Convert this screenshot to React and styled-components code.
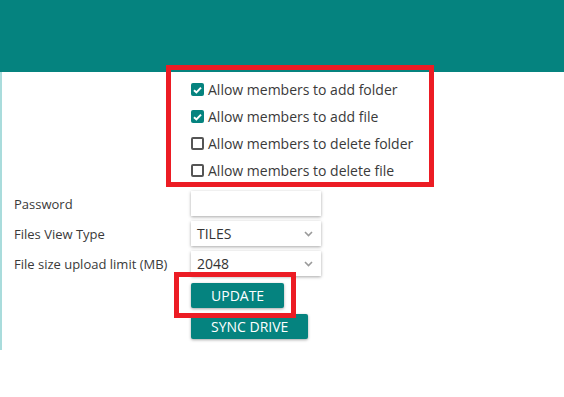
import React from 'react';
import styled, { createGlobalStyle } from 'styled-components';

const teal = '#05837f';

const GlobalStyle = createGlobalStyle`
  body {
    margin: 0;
    background: #ffffff;
    font-family: 'Open Sans', 'Liberation Sans', sans-serif;
  }
`;

const Header = styled.header`
  height: 72px;
  background: ${teal};
`;

const Panel = styled.main`
  height: 278px;
  box-sizing: border-box;
  border-left: 2px solid #a9dcdc;
  padding: 4.5px 0 0 12px;
`;

const Highlight = styled.div`
  position: relative;

  &::after {
    content: '';
    position: absolute;
    top: ${({ $top }) => $top}px;
    left: ${({ $left }) => $left}px;
    right: ${({ $right }) => $right}px;
    bottom: ${({ $bottom }) => $bottom}px;
    border: 5px solid #ec1c24;
    pointer-events: none;
  }
`;

const CheckList = styled.div`
  display: flex;
  flex-direction: column;
  margin-left: 177px;
  width: 238px;
`;

const CheckRow = styled.label`
  display: flex;
  align-items: center;
  gap: 4px;
  height: 26.8px;
  font-size: 14px;
  color: #3a3a3a;
`;

const Box = styled.span`
  display: flex;
  align-items: center;
  justify-content: center;
  width: 13px;
  height: 13px;
  box-sizing: border-box;
  border-radius: 2px;
  background: ${({ $checked }) => ($checked ? teal : '#ffffff')};
  border: ${({ $checked }) => ($checked ? 'none' : '2px solid #555555')};
`;

const Form = styled.div`
  display: grid;
  grid-template-columns: 177px 130px;
  row-gap: 5px;
  margin-top: 7.5px;
  align-items: center;
`;

const Label = styled.span`
  font-size: 13px;
  color: #3a3a3a;
`;

const Field = styled.div`
  height: 25px;
  box-sizing: border-box;
  padding: 0 8px 0 6px;
  display: flex;
  align-items: center;
  justify-content: space-between;
  background: #ffffff;
  box-shadow: 0 1px 3px rgba(0, 0, 0, 0.35);
  font-size: 14px;
  color: #333333;
`;

const Actions = styled.div`
  display: flex;
  flex-direction: column;
  align-items: flex-start;
  gap: 6px;
  margin: 6.5px 0 0 177px;
`;

const Button = styled.button`
  height: 25px;
  padding: 0 20px;
  border: none;
  border-radius: 2px;
  background: ${teal};
  color: #ffffff;
  font-family: 'Open Sans', 'Liberation Sans', sans-serif;
  font-size: 14px;
  text-transform: uppercase;
  box-shadow: 0 1px 3px rgba(0, 0, 0, 0.35);
  cursor: pointer;
`;

const Check = () => (
  <svg width="9" height="8" viewBox="0 0 9 8">
    <path d="M1 4.2 L3.4 6.4 L8 1.6" fill="none" stroke="#fff" strokeWidth="2" />
  </svg>
);

const Chevron = () => (
  <svg width="9" height="6" viewBox="0 0 9 6">
    <path d="M1 1 L4.5 4.5 L8 1" fill="none" stroke="#9a9a9a" strokeWidth="1.6" />
  </svg>
);

const permissions = [
  { text: 'Allow members to add folder', checked: true },
  { text: 'Allow members to add file', checked: true },
  { text: 'Allow members to delete folder', checked: false },
  { text: 'Allow members to delete file', checked: false },
];

export default function App() {
  return (
    <React.Fragment>
      <GlobalStyle />
      <Header />
      <Panel>
        <Highlight $top={-11.5} $left={152} $right={130} $bottom={-3.5}>
          <CheckList>
            {permissions.map((p) => (
              <CheckRow key={p.text}>
                <Box $checked={p.checked}>{p.checked && <Check />}</Box>
                {p.text}
              </CheckRow>
            ))}
          </CheckList>
        </Highlight>
        <Form>
          <Label>Password</Label>
          <Field />
          <Label>Files View Type</Label>
          <Field>
            TILES
            <Chevron />
          </Field>
          <Label>File size upload limit (MB)</Label>
          <Field>
            2048
            <Chevron />
          </Field>
        </Form>
        <Actions>
          <Highlight $top={-11} $left={-17} $right={-12} $bottom={-10}>
            <Button>Update</Button>
          </Highlight>
          <Button>Sync Drive</Button>
        </Actions>
      </Panel>
    </React.Fragment>
  );
}
